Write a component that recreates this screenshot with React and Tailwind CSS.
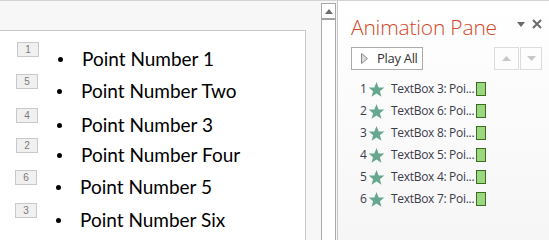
import React from 'react';

const points = [
  { tag: '1', text: 'Point Number 1', h: 'h-[32px]', tx: 'ml-[17px]' },
  { tag: '5', text: 'Point Number Two', h: 'h-[34px]', tx: 'ml-[16px]' },
  { tag: '4', text: 'Point Number 3', h: 'h-[30px]', tx: 'ml-[16px]' },
  { tag: '2', text: 'Point Number Four', h: 'h-[32px]', tx: 'ml-[16px]' },
  { tag: '6', text: 'Point Number 5', h: 'h-[33px]', tx: 'ml-[15px]' },
  { tag: '3', text: 'Point Number Six', h: 'h-[32px]', tx: 'ml-[15px]' },
];

const anims = [
  { n: 1, label: 'TextBox 3: Poi...' },
  { n: 2, label: 'TextBox 6: Poi...' },
  { n: 3, label: 'TextBox 8: Poi...' },
  { n: 4, label: 'TextBox 5: Poi...' },
  { n: 5, label: 'TextBox 4: Poi...' },
  { n: 6, label: 'TextBox 7: Poi...' },
];

const Star = () => (
  <svg width="17" height="17" viewBox="0 0 24 24">
    <polygon
      points="12,1.5 15,9 23,9.3 16.8,14.3 19,22.3 12,17.8 5,22.3 7.2,14.3 1,9.3 9,9"
      fill="#67a78f"
    />
  </svg>
);

const App = () => {
  return (
    <div className="w-[549px] h-[240px] overflow-hidden flex flex-col bg-[#f7f7f7] font-['Liberation_Sans',sans-serif]">
      <div className="h-px bg-[#d4d4d4] shrink-0" />
      <div className="flex flex-1 min-h-0">
        {/* slide editor */}
        <div className="w-[321px] pt-[29px] pr-[15px]">
          <div className="h-full bg-white border-t border-r border-[#c6c6c6] pt-[11px] font-['Lato',sans-serif]">
            {points.map((p) => (
              <div key={p.tag} className={`flex items-start ${p.h}`}>
                <div className={`${p.tx} w-[22px] h-[15px] bg-[#f0f0f0] border border-[#c9c9c9] text-[10px] leading-[13px] text-center text-[#7a7a7a] font-['Liberation_Sans',sans-serif]`}>
                  {p.tag}
                </div>
                <div className="mt-[5px] flex items-center h-[24px] text-[19px] text-black">
                  <span className="ml-[19px] w-[5px] h-[5px] rounded-full bg-black" />
                  <span className="ml-[19px]">{p.text}</span>
                </div>
              </div>
            ))}
          </div>
        </div>

        {/* scrollbar */}
        <div className="w-[16px] pt-[2px]">
          <div className="w-[15px] h-full border-x border-t border-[#a9a9a9] bg-white flex flex-col">
            <div className="h-[14px] flex items-center justify-center">
              <svg width="8" height="5" viewBox="0 0 8 5">
                <polygon points="4,0 8,5 0,5" fill="#6b6b6b" />
              </svg>
            </div>
            <div className="h-[2px] bg-[#a0a0a0]" />
          </div>
        </div>

        {/* animation pane */}
        <div className="flex-1 border-l border-[#c6c6c6] bg-gradient-to-b from-white to-[#f6f6f6] pl-[13px] pr-[7px]">
          <div className="flex items-start justify-between pt-[13px]">
            <div className="text-[21px] leading-[26px] font-light text-[#d24726] font-['Open_Sans',sans-serif] tracking-[-0.2px]">
              Animation Pane
            </div>
            <div className="flex items-center gap-[7px] pt-[5px]">
              <svg width="8" height="5" viewBox="0 0 8 5">
                <polygon points="0,0 8,0 4,5" fill="#6a6a6a" />
              </svg>
              <svg width="10" height="10" viewBox="0 0 10 10">
                <path d="M1 1 L9 9 M9 1 L1 9" stroke="#6a6a6a" strokeWidth="2" />
              </svg>
            </div>
          </div>

          <div className="flex items-center justify-between mt-[7px]">
            <button className="w-[72px] h-[23px] border border-[#ababab] bg-white flex items-center pl-[9px] gap-[9px] text-[13px] text-[#333] font-['Open_Sans',sans-serif]">
              <svg width="7" height="11" viewBox="0 0 7 11">
                <polygon points="0.5,0.5 6.5,5.5 0.5,10.5" fill="#dcdcdc" stroke="#8a8a8a" strokeWidth="1" />
              </svg>
              <span className="tracking-[-0.3px]">Play All</span>
            </button>
            <div className="flex gap-px">
              <div className="w-[25px] h-[23px] border border-[#dcdcdc] flex items-center justify-center">
                <svg width="9" height="5" viewBox="0 0 9 5">
                  <polygon points="4.5,0 9,5 0,5" fill="#c8c8c8" />
                </svg>
              </div>
              <div className="w-[22px] h-[23px] border border-[#dcdcdc] flex items-center justify-center">
                <svg width="9" height="5" viewBox="0 0 9 5">
                  <polygon points="0,0 9,0 4.5,5" fill="#c8c8c8" />
                </svg>
              </div>
            </div>
          </div>

          <div className="mt-[8px] flex flex-col font-['Open_Sans',sans-serif] text-[12px] text-[#3b3b4b]">
            {anims.map((a) => (
              <div key={a.n} className="h-[22px] flex items-center pl-[9px]">
                <span className="w-[8px]">{a.n}</span>
                <Star />
                <span className="ml-[6px] w-[85px] tracking-[-0.3px] whitespace-nowrap">{a.label}</span>
                <span className="w-[10px] h-[14px] bg-[#9bd77f] border border-[#3d6b22]" />
              </div>
            ))}
          </div>
        </div>
      </div>
    </div>
  );
};

export default App;
